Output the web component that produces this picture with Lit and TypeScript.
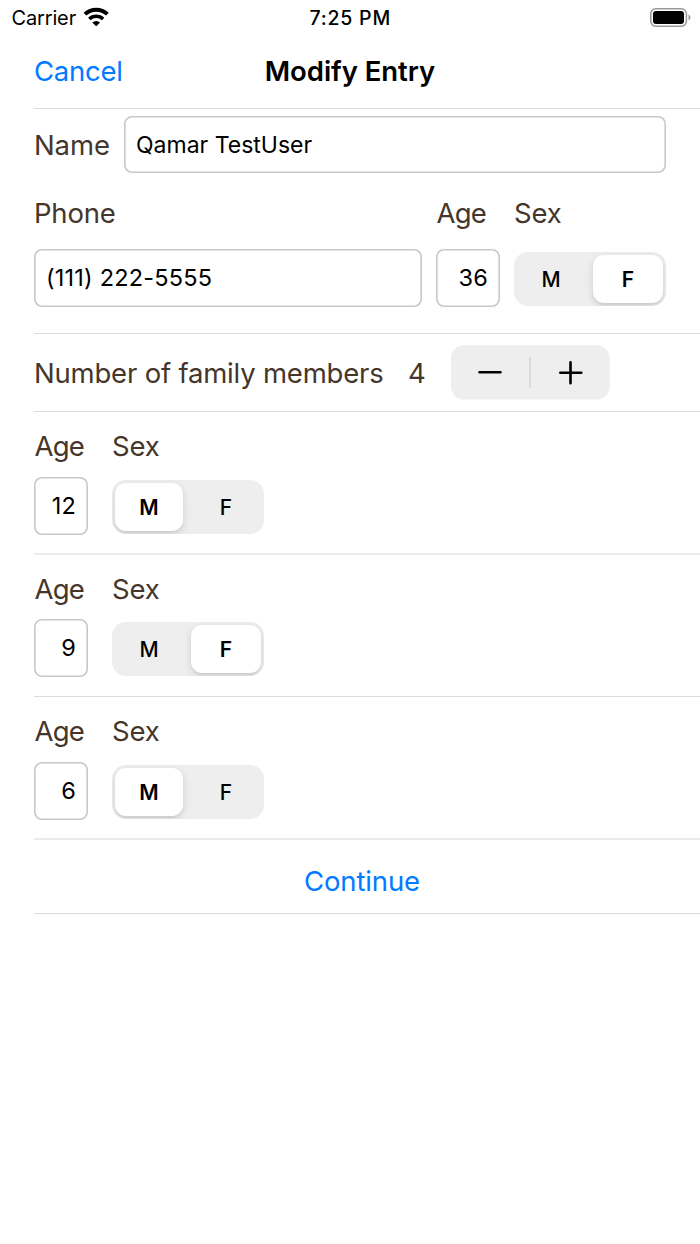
import { LitElement, html, css } from "lit";
import { customElement, property, state } from "lit/decorators.js";
import { classMap } from "lit/directives/class-map.js";

type Sex = "M" | "F";

@customElement("sex-picker")
class SexPicker extends LitElement {
  @property() value: Sex = "M";

  static styles = css`
    :host { display: block; width: 152px; height: 54px; }
    .track { box-sizing: border-box; display: flex; justify-content: space-between; width: 152px; height: 54px; padding: 3px; border-radius: 14px; background: #eeeeef; overflow: hidden; }
    .option { width: 70px; height: 48px; border: 0; padding: 0; border-radius: 11px; background: transparent; color: #000; font: 500 21px/49px Inter, sans-serif; text-align: center; }
    .option.m { width: 68px; }
    .option.on { background: #fff; font-weight: 600; box-shadow: 0 3px 8px rgba(0, 0, 0, 0.12), 0 2px 2px rgba(0, 0, 0, 0.05); }
  `;

  render() {
    return html`<div class="track">
      ${(["M", "F"] as Sex[]).map(
        (s) => html`<button class=${classMap({ option: true, m: s === "M", on: this.value === s })} @click=${() => (this.value = s)}>${s}</button>`
      )}
    </div>`;
  }
}

@customElement("app-root")
class AppRoot extends LitElement {
  @state() members: { age: number; sex: Sex }[] = [
    { age: 12, sex: "M" },
    { age: 9, sex: "F" },
    { age: 6, sex: "M" },
  ];

  static styles = css`
    :host { display: block; width: 700px; height: 1244px; overflow: hidden; background: #fff; color: #000; font-family: Inter, sans-serif; }
    .status { display: grid; grid-template-columns: 1fr auto 1fr; align-items: center; height: 36px; padding: 0 9px 0 11.5px; box-sizing: border-box; font-size: 20px; }
    .left { display: flex; align-items: center; gap: 7px; letter-spacing: -0.15px; }
    .left svg { margin-top: -3px; }
    .time { font-weight: 500; font-size: 19.5px; letter-spacing: 0.8px; margin-right: 2px; }
    .battery { justify-self: end; display: block; margin-top: -1px; }
    .nav { display: grid; grid-template-columns: 1fr auto 1fr; align-items: center; height: 72px; padding: 0 34px 2px; box-sizing: border-box; font-size: 27.5px; }
    .link { color: #007aff; letter-spacing: -0.25px; }
    .title { font-weight: 600; letter-spacing: -0.05px; }
    .section { margin-left: 34px; border-top: 1px solid #dcdcde; box-sizing: border-box; color: #45362b; font-size: 27.5px; line-height: 37px; letter-spacing: -0.2px; }
    .soft { border-top: 2px solid #ebebed; }
    .main { height: 225px; padding: 7px 34px 0 0; }
    .name-row { display: flex; align-items: center; height: 57px; }
    .name-label { width: 90px; padding-top: 1px; letter-spacing: -0.1px; }
    .field { box-sizing: border-box; height: 58px; border-radius: 8px; box-shadow: inset 0 0 0 1.6px #c8c8cc; padding: 0 12px; color: #000; font-size: 23.5px; line-height: 58px; letter-spacing: 0.2px; white-space: nowrap; }
    .name-row .field { height: 57px; font-size: 23px; letter-spacing: 0; }
    .num { text-align: right; }
    .grow { flex: 1; }
    .age { letter-spacing: -0.8px; padding-left: 0.5px; }
    .contact { display: grid; grid-template-columns: 388px 64px 152px; column-gap: 14px; margin-top: 22px; }
    .contact .field { margin-top: 17px; }
    .contact sex-picker { margin-top: 20px; }
    .count { display: flex; align-items: center; height: 78px; }
    .count-label { width: 374px; padding-top: 2px; letter-spacing: -0.2px; }
    .count-value { width: 43px; padding-top: 2px; }
    .member { display: grid; grid-template-columns: 54px 152px; column-gap: 24px; height: 142px; align-content: start; padding-top: 16px; }
    .member.soft { height: 143px; }
    .member .field { margin-top: 12px; }
    .member sex-picker { margin-top: 15px; }
    .member.soft .field { margin-top: 11px; }
    .member.soft sex-picker { margin-top: 14px; }
    .submit { height: 75px; line-height: 82px; text-align: center; padding-right: 10px; color: #007aff; letter-spacing: -0.15px; }
    .end { height: 2px; }
  `;

  render() {
    return html`
      <div class="status">
        <div class="left"><span>Carrier</span>
          <svg width="27" height="20" viewBox="0 0 27 20"><g fill="none" stroke="#000" stroke-width="4"><path d="M2 7.1a16.4 16.4 0 0 1 22.4 0"/><path d="M6.3 12a10.2 10.2 0 0 1 13.8 0" stroke-width="3.6"/></g><path d="M13.2 19.3l-3.9-3.7a5.6 5.6 0 0 1 7.8 0z"/></svg>
        </div>
        <div class="time">7:25 PM</div>
        <svg class="battery" width="41" height="20" viewBox="0 0 41 20"><rect x=".8" y=".8" width="35.6" height="17.4" rx="5" fill="#fff" stroke="#999" stroke-width="1.6"/><rect x="3" y="3" width="31" height="13" rx="3"/><path d="M38.5 6.5q2 1 2 3t-2 3z" fill="#999"/></svg>
      </div>
      <div class="nav"><span class="link">Cancel</span><span class="title">Modify Entry</span></div>
      <div class="section main">
        <div class="name-row"><span class="name-label">Name</span><div class="field grow">Qamar TestUser</div></div>
        <div class="contact">
          <span>Phone</span><span class="age">Age</span><span>Sex</span>
          <div class="field">(111) 222-5555</div><div class="field num">36</div><sex-picker value="F"></sex-picker>
        </div>
      </div>
      <div class="section count"><span class="count-label">Number of family members</span><span class="count-value">4</span>
        <svg width="159" height="55" viewBox="0 0 159 55"><rect y=".3" width="158.7" height="54.2" rx="13" fill="#eeeeef"/><path d="M79 12v31" stroke="#d6d6d8" stroke-width="1.6"/><path d="M28.5 27.3h21M109.3 27.7h21M119.5 17.2v21" stroke="#000" stroke-width="2.6" stroke-linecap="round"/></svg>
      </div>
      ${this.members.map((m, i) => html`<div class=${classMap({ section: true, member: true, soft: i % 2 === 1 })}><span class="age">Age</span><span>Sex</span><div class="field num">${m.age}</div><sex-picker .value=${m.sex}></sex-picker></div>`)}
      <div class="section soft submit">Continue</div>
      <div class="section end"></div>
    `;
  }
}
